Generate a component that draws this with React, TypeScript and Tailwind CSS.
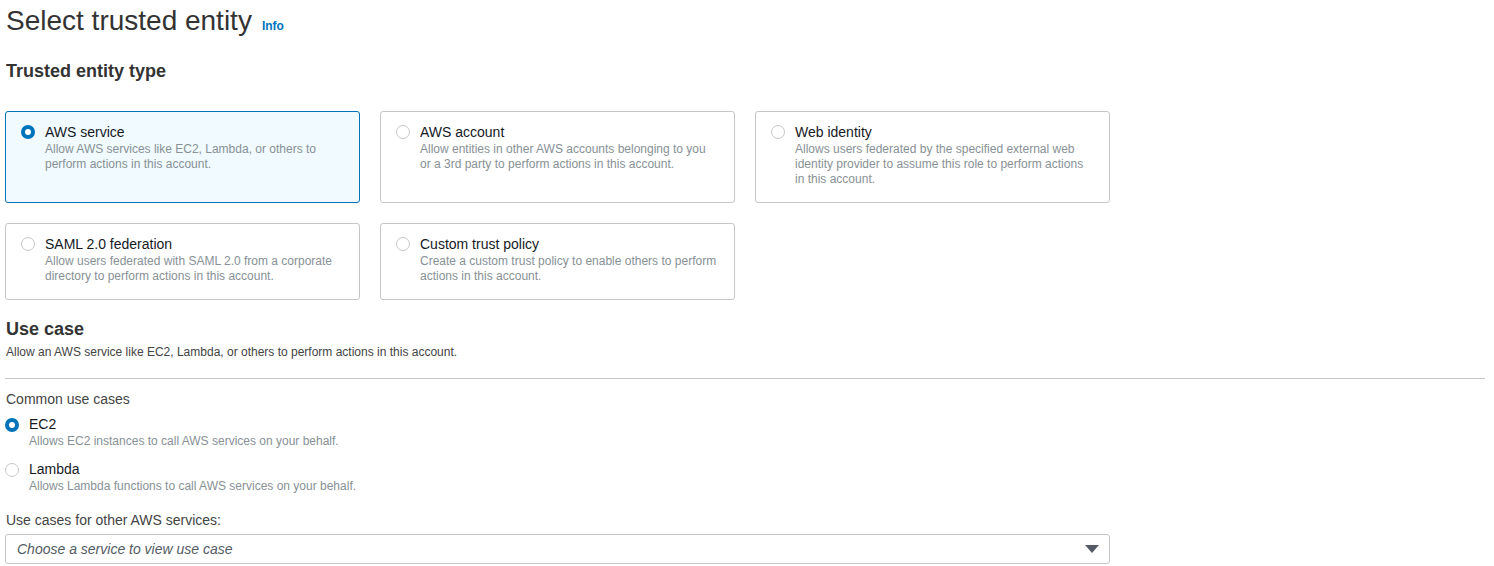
import React from 'react';

const FONT = { fontFamily: '"Liberation Sans", Arial, sans-serif' };

interface CardDef {
  title: string;
  desc: string[];
  selected?: boolean;
}

const ROW1: CardDef[] = [
  { title: 'AWS service', desc: ['Allow AWS services like EC2, Lambda, or others to', 'perform actions in this account.'], selected: true },
  { title: 'AWS account', desc: ['Allow entities in other AWS accounts belonging to you', 'or a 3rd party to perform actions in this account.'] },
  { title: 'Web identity', desc: ['Allows users federated by the specified external web', 'identity provider to assume this role to perform actions', 'in this account.'] },
];

const ROW2: CardDef[] = [
  { title: 'SAML 2.0 federation', desc: ['Allow users federated with SAML 2.0 from a corporate', 'directory to perform actions in this account.'] },
  { title: 'Custom trust policy', desc: ['Create a custom trust policy to enable others to perform', 'actions in this account.'] },
];

function Radio({ checked }: { checked?: boolean }) {
  return checked ? (
    <span className="block w-[14px] h-[14px] rounded-full bg-[#0073bb] flex items-center justify-center shrink-0">
      <span className="block w-[6px] h-[6px] rounded-full bg-white" />
    </span>
  ) : (
    <span className="block w-[14px] h-[14px] rounded-full border border-[#c4c8ca] bg-white shrink-0" />
  );
}

function Card({ card, height }: { card: CardDef; height: string }) {
  return (
    <div
      className={`w-[355px] ${height} rounded-[3px] border flex gap-[10px] pl-[15px] pt-[12px] ${
        card.selected ? 'border-[#0073bb] bg-[#f1faff]' : 'border-[#c6c6c6] bg-white'
      }`}
    >
      <div className="pt-[1px]">
        <Radio checked={card.selected} />
      </div>
      <div>
        <div className="text-[14px] leading-[16px] text-[#16191f]">{card.title}</div>
        <div className="text-[12px] leading-[15px] text-[#879196] mt-[2px]">
          {card.desc.map(l => (
            <div key={l}>{l}</div>
          ))}
        </div>
      </div>
    </div>
  );
}

function UseCase({ title, desc, checked }: { title: string; desc: string; checked?: boolean }) {
  return (
    <div className="flex gap-[10px]">
      <div className="pt-[2px]">
        <Radio checked={checked} />
      </div>
      <div>
        <div className="text-[14px] leading-[16px] text-[#16191f]">{title}</div>
        <div className="text-[12px] leading-[15px] text-[#879196] mt-[2px]">{desc}</div>
      </div>
    </div>
  );
}

export default function App() {
  return (
    <div className="bg-white min-h-screen w-[1494px] h-[566px] overflow-hidden px-[5px]" style={FONT}>
      {/* Header */}
      <div className="flex items-baseline gap-[10px] pt-[3px] pl-[1px]">
        <h1 className="text-[28px] leading-[36px] text-[#333333]">Select trusted entity</h1>
        <a className="text-[12px] font-bold text-[#0073bb]">Info</a>
      </div>
      <h2 className="text-[18px] leading-[22px] font-bold text-[#333333] mt-[21px] pl-[1px]">Trusted entity type</h2>

      {/* Entity cards */}
      <div className="mt-[29px] flex flex-col gap-[20px]">
        <div className="flex gap-[20px]">
          {ROW1.map(c => (
            <Card key={c.title} card={c} height="h-[92px]" />
          ))}
        </div>
        <div className="flex gap-[20px]">
          {ROW2.map(c => (
            <Card key={c.title} card={c} height="h-[77px]" />
          ))}
        </div>
      </div>

      {/* Use case */}
      <h2 className="text-[18px] leading-[22px] font-bold text-[#333333] mt-[18px] pl-[1px]">Use case</h2>
      <p className="text-[12px] leading-[15px] text-[#444444] mt-[5px] pl-[1px]">
        Allow an AWS service like EC2, Lambda, or others to perform actions in this account.
      </p>
      <div className="w-[1480px] border-t border-[#c6c6c6] mt-[18px]" />

      <div className="text-[14px] leading-[16px] text-[#444444] mt-[12px] pl-[1px]">Common use cases</div>
      <div className="mt-[9px] flex flex-col gap-[12px]">
        <UseCase title="EC2" desc="Allows EC2 instances to call AWS services on your behalf." checked />
        <UseCase title="Lambda" desc="Allows Lambda functions to call AWS services on your behalf." />
      </div>

      <div className="text-[14px] leading-[16px] text-[#444444] mt-[18px] pl-[1px]">Use cases for other AWS services:</div>
      <div className="mt-[6px] w-[1105px] h-[30px] border border-[#c6c6c6] rounded-[3px] flex items-center justify-between pl-[11px] pr-[10px]">
        <span className="italic text-[14px] text-[#545b64]">Choose a service to view use case</span>
        <svg width="14" height="8" viewBox="0 0 14 8">
          <path d="M0 0 L14 0 L7 8 Z" fill="#545b64" />
        </svg>
      </div>
    </div>
  );
}
